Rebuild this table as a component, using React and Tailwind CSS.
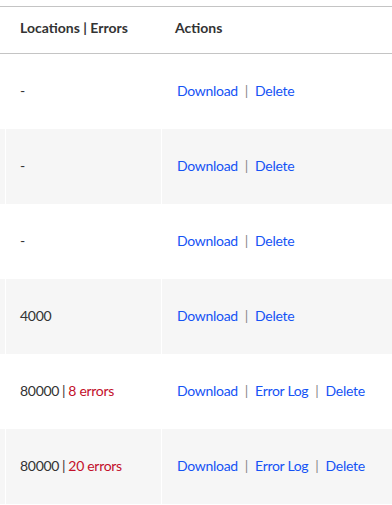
import React from "react";

const rows = [
  { loc: "-", errors: null, errorLog: false },
  { loc: "-", errors: null, errorLog: false },
  { loc: "-", errors: null, errorLog: false },
  { loc: "4000", errors: null, errorLog: false },
  { loc: "80000", errors: "8 errors", errorLog: true },
  { loc: "80000", errors: "20 errors", errorLog: true },
];

function Sep() {
  return <span className="mx-[7px] text-[#888]">|</span>;
}

function Link({ children }) {
  return <a className="text-[#1553f5] cursor-pointer">{children}</a>;
}

export default function App() {
  return (
    <div
      className="w-[392px] h-[505px] bg-white text-[14px] text-[#333] overflow-hidden pt-[6px]"
      style={{ fontFamily: "Lato, 'Open Sans', sans-serif" }}
    >
      {/* header */}
      <div className="flex h-[48px] border-t border-b border-[#c4c4c4] items-center font-bold pb-[5px]">
        <div className="w-[6px]" />
        <div className="w-[156px] pl-[14px]">
          Locations <span className="font-bold">|</span> Errors
        </div>
        <div className="pl-[13px]">Actions</div>
      </div>

      {/* body rows */}
      {rows.map((r, i) => {
        const bg = i % 2 === 1 ? "bg-[#f6f6f6]" : "bg-white";
        return (
          <div key={i} className={`flex h-[75px] items-center tracking-[-0.3px] ${bg}`}>
            <div className="w-[6px] h-full border-r border-white" />
            <div className="w-[156px] h-full flex items-center pl-[14px] pb-[2px] border-r border-white">
              <span>{r.loc}</span>
              {r.errors && (
                <>
                  <span className="mx-[3px] text-[#333]">|</span>
                  <span className="text-[#c3102b]">{r.errors}</span>
                </>
              )}
            </div>
            <div className="flex-1 h-full flex items-center pl-[15px] pb-[2px] whitespace-nowrap">
              <Link>Download</Link>
              <Sep />
              {r.errorLog && (
                <>
                  <Link>Error Log</Link>
                  <Sep />
                </>
              )}
              <Link>Delete</Link>
            </div>
          </div>
        );
      })}
    </div>
  );
}
